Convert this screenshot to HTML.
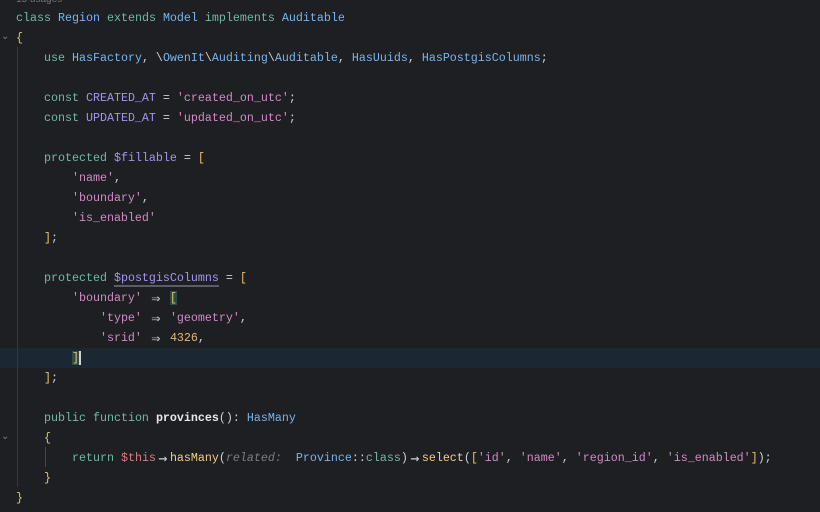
<!DOCTYPE html>
<html><head><meta charset="utf-8"><style>
html,body{margin:0;padding:0;background:#1e1f22;width:820px;height:512px;overflow:hidden}
.ed{position:relative;width:820px;height:512px;font-family:"Liberation Mono",monospace;font-size:11.67px;color:#ced0d6}
.l{position:absolute;left:16px;height:20px;line-height:20px;white-space:pre}
.k{color:#6fb8a8}.c{color:#78b4ee}.s{color:#d28ac6}.v{color:#a593f0}.b{color:#e6c06a}
.m{color:#f0d08a}.t{color:#dc7a82}.n{color:#e3b878}.h{color:#7a7e85;font-style:italic}
.f{color:#e6e8ec;font-weight:bold}
.a{display:inline-block;width:14px;text-align:center;font-family:"DejaVu Sans Mono",monospace;font-size:15px;line-height:20px;height:20px;vertical-align:top;overflow:hidden}
.cur{position:absolute;left:0;top:348px;width:820px;height:20px;background:#1b2733}
.g{position:absolute;width:1px;background:#35373c}
.fold{position:absolute;left:1px;color:#7a7e85;font-size:10px;font-family:"DejaVu Sans",sans-serif}
</style></head><body><div class="ed">
<div class="cur"></div>
<div class="g" style="left:17px;top:47px;height:440px"></div>
<div class="g" style="left:45px;top:447px;height:20px;background:#45474c"></div>
<div style="position:absolute;left:16px;top:-6px;font-family:'Liberation Sans',sans-serif;font-size:10px;color:#6f737a">15 usages</div>
<div class="fold" style="top:31px">⌄</div>
<div class="fold" style="top:431px">⌄</div>
<div class="l" style="top:8px"><span class="k">class</span> <span class="c">Region</span> <span class="k">extends</span> <span class="c">Model</span> <span class="k">implements</span> <span class="c">Auditable</span></div>
<div class="l" style="top:28px"><span class="b">{</span></div>
<div class="l" style="top:48px">    <span class="k">use</span> <span class="c">HasFactory</span>, \<span class="c">OwenIt</span>\<span class="c">Auditing</span>\<span class="c">Auditable</span>, <span class="c">HasUuids</span>, <span class="c">HasPostgisColumns</span>;</div>
<div class="l" style="top:88px">    <span class="k">const</span> <span class="v">CREATED_AT</span> = <span class="s">'created_on_utc'</span>;</div>
<div class="l" style="top:108px">    <span class="k">const</span> <span class="v">UPDATED_AT</span> = <span class="s">'updated_on_utc'</span>;</div>
<div class="l" style="top:148px">    <span class="k">protected</span> <span class="v">$fillable</span> = <span class="b">[</span></div>
<div class="l" style="top:168px">        <span class="s">'name'</span>,</div>
<div class="l" style="top:188px">        <span class="s">'boundary'</span>,</div>
<div class="l" style="top:208px">        <span class="s">'is_enabled'</span></div>
<div class="l" style="top:228px">    <span class="b">]</span>;</div>
<div class="l" style="top:268px">    <span class="k">protected</span> <span class="v" style="border-bottom:2px solid #5a5d63">$postgisColumns</span> = <span class="b">[</span></div>
<div class="l" style="top:288px">        <span class="s">'boundary'</span> <span class="a">⇒</span> <span class="b" style="background:#2c4a47">[</span></div>
<div class="l" style="top:308px">            <span class="s">'type'</span> <span class="a">⇒</span> <span class="s">'geometry'</span>,</div>
<div class="l" style="top:328px">            <span class="s">'srid'</span> <span class="a">⇒</span> <span class="n">4326</span>,</div>
<div class="l" style="top:348px">        <span class="b" style="background:#2c4a47">]</span><span style="border-left:2px solid #d0d2d6"></span></div>
<div class="l" style="top:368px">    <span class="b">]</span>;</div>
<div class="l" style="top:408px">    <span class="k">public</span> <span class="k">function</span> <span class="f">provinces</span>(): <span class="c">HasMany</span></div>
<div class="l" style="top:428px">    <span class="b">{</span></div>
<div class="l" style="top:448px">        <span class="k">return</span> <span class="t">$this</span><span class="a">→</span><span class="m">hasMany</span>(<span class="h">related:</span>  <span class="c">Province</span>::<span class="k">class</span>)<span class="a">→</span><span class="m">select</span>(<span class="b">[</span><span class="s">'id'</span>, <span class="s">'name'</span>, <span class="s">'region_id'</span>, <span class="s">'is_enabled'</span><span class="b">]</span>);</div>
<div class="l" style="top:468px">    <span class="b">}</span></div>
<div class="l" style="top:488px"><span class="b">}</span></div>
</div></body></html>
